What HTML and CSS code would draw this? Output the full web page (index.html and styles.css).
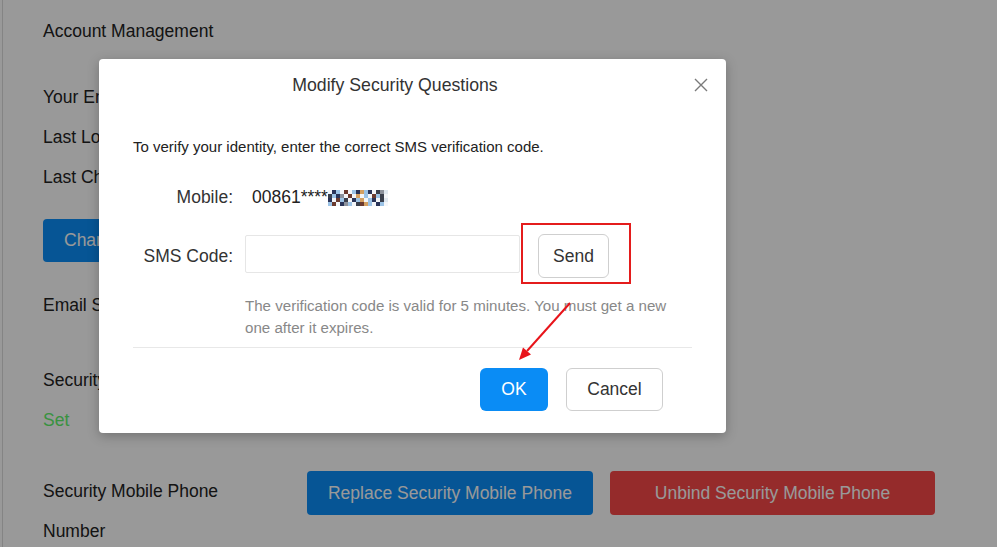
FILE: index.html
```html
<!DOCTYPE html>
<html lang="en">
<head>
<meta charset="utf-8">
<title>Account Management</title>
<link rel="stylesheet" href="styles.css">
</head>
<body>
<div class="page">
  <main class="content">
    <h1 class="page-title">Account Management</h1>
    <div class="info">
      <div class="info-row">Your Email</div>
      <div class="info-row">Last Login</div>
      <div class="info-row">Last Change</div>
    </div>
    <button class="btn-bg btn-blue change-btn">Change</button>
    <div class="info-row email-row">Email Status</div>
    <div class="info-row sec-row">Security Questions</div>
    <div class="info-row set">Set</div>
    <div class="phone-row">
      <div class="phone-label">Security Mobile Phone Number</div>
      <div class="phone-actions">
        <button class="btn-bg btn-blue replace-btn">Replace Security Mobile Phone</button>
        <button class="btn-bg btn-red unbind-btn">Unbind Security Mobile Phone</button>
      </div>
    </div>
  </main>
</div>

<div class="overlay">
  <div class="modal">
    <div class="modal-header">
      <div class="modal-title">Modify Security Questions</div>
      <button class="close" aria-label="Close">
        <svg width="14" height="14" viewBox="0 0 14 14"><path d="M1 1L13 13M13 1L1 13" stroke="#7a7a7a" stroke-width="1.4" fill="none"/></svg>
      </button>
    </div>
    <div class="modal-body">
      <p class="intro">To verify your identity, enter the correct SMS verification code.</p>
      <div class="form-row mobile-row">
        <div class="label">Mobile:</div>
        <div class="value">00861****<span class="blob"><i class="w"></i><i class="k"></i><i class="l"></i><i class="w"></i><i class="b"></i><i class="w"></i><i class="l"></i><i class="k"></i><i class="o"></i><i class="l"></i><i class="k"></i><i class="w"></i><i class="d"></i><i class="g"></i><i class="p"></i><i class="d"></i><i class="l"></i><i class="k"></i><i class="g"></i><i class="w"></i><i class="b"></i><i class="w"></i><i class="o"></i><i class="w"></i><i class="l"></i><i class="w"></i><i class="b"></i><i class="l"></i><i class="d"></i><i class="w"></i><i class="k"></i><i class="w"></i><i class="b"></i><i class="l"></i><i class="d"></i><i class="w"></i><i class="k"></i><i class="l"></i><i class="o"></i><i class="w"></i><i class="l"></i><i class="k"></i><i class="w"></i><i class="d"></i><i class="p"></i><i class="l"></i><i class="b"></i><i class="w"></i><i class="k"></i><i class="g"></i><i class="l"></i><i class="w"></i><i class="d"></i><i class="b"></i><i class="o"></i><i class="l"></i><i class="w"></i><i class="k"></i><i class="l"></i><i class="w"></i></span></div>
      </div>
      <div class="form-row sms-row">
        <div class="label">SMS Code:</div>
        <input class="code-input" type="text">
        <div class="send-wrap">
          <button class="send">Send</button>
        </div>
      </div>
      <p class="help">The verification code is valid for 5 minutes. You must get a new one after it expires.</p>
      <div class="divider"></div>
      <div class="modal-footer">
        <button class="ok">OK</button>
        <button class="cancel">Cancel</button>
      </div>
    </div>
    <svg class="arrow" width="70" height="70" viewBox="0 0 70 70">
      <line x1="56" y1="4" x2="13" y2="52" stroke="#e8141a" stroke-width="2"/>
      <polygon points="5,61 17,55.5 9,48.5" fill="#e8141a"/>
    </svg>
  </div>
</div>
</body>
</html>
```

FILE: styles.css
```css
* { box-sizing: border-box; }
html, body { margin: 0; padding: 0; }
body {
  width: 997px;
  height: 547px;
  overflow: hidden;
  font-family: "Liberation Sans", Arial, sans-serif;
  background: #fff;
  color: #222;
  position: relative;
}
.page {
  padding-left: 2px;
  height: 547px;
}
.content {
  border-left: 1px solid #dcdcdc;
  padding-left: 40px;
  height: 547px;
  padding-top: 11px;
}
.page-title {
  margin: 0;
  font-size: 17.5px;
  font-weight: normal;
  line-height: 40px;
}
.info { margin-top: 26px; }
.info-row {
  font-size: 17.5px;
  line-height: 40px;
  white-space: nowrap;
}
.btn-bg {
  font-family: "Liberation Sans", Arial, sans-serif;
  border: none;
  border-radius: 4px;
  color: #fff;
  font-size: 17.5px;
  display: block;
}
.btn-blue { background: #0a8ef8; }
.btn-red { background: #f84848; }
.change-btn {
  margin-top: 22px;
  height: 43px;
  width: 100px;
  text-align: left;
  padding-left: 21px;
}
.email-row { margin-top: 23px; }
.sec-row { margin-top: 35px; }
.set { color: #60f46c; }
.phone-row {
  margin-top: 31px;
  display: flex;
  align-items: flex-start;
}
.phone-label {
  width: 200px;
  font-size: 17.5px;
  line-height: 40px;
}
.phone-actions {
  margin-left: 64px;
  display: flex;
  gap: 17px;
}
.replace-btn { width: 286px; height: 44px; }
.unbind-btn { width: 325px; height: 44px; }

.overlay {
  position: absolute;
  inset: 0;
  background: rgba(0, 0, 0, 0.4);
  padding-left: 99px;
  padding-top: 59px;
}
.modal {
  position: relative;
  width: 627px;
  height: 374px;
  background: #fff;
  border-radius: 4px;
  box-shadow: 0 3px 12px rgba(0, 0, 0, 0.25);
}
.modal-header {
  display: flex;
  height: 52px;
  padding-right: 16px;
}
.modal-title {
  flex: 1;
  text-align: center;
  font-size: 17.7px;
  line-height: 52px;
  color: #333;
}
.close {
  width: 19px;
  border: none;
  background: none;
  padding: 0;
  display: flex;
  align-items: center;
  justify-content: center;
}
.modal-body {
  padding: 26px 34px 0 34px;
}
.intro {
  margin: 0;
  font-size: 15px;
  line-height: 20px;
  color: #222;
}
.form-row {
  display: flex;
  align-items: center;
}
.label {
  width: 100px;
  text-align: right;
  font-size: 17.5px;
  color: #333;
  flex: none;
}
.mobile-row {
  margin-top: 21px;
  height: 38px;
}
.value {
  margin-left: 19px;
  font-size: 17.5px;
  color: #222;
  display: flex;
  align-items: center;
}
.blob {
  display: inline-grid;
  grid-template-columns: repeat(15, 4px);
  grid-auto-rows: 4px;
  margin-top: 1px;
}
.blob i { display: block; }
.blob .w { background: #f4f6f9; }
.blob .k { background: #2a3458; }
.blob .l { background: #9cc3e6; }
.blob .b { background: #6b3a2e; }
.blob .o { background: #d4a061; }
.blob .d { background: #3a3f4c; }
.blob .g { background: #8d929c; }
.blob .p { background: #dfe7ef; }

.sms-row {
  margin-top: 18px;
  height: 44px;
  align-items: flex-start;
}
.sms-row .label { line-height: 44px; }
.code-input {
  margin-left: 12px;
  margin-top: 1px;
  width: 275px;
  height: 38px;
  border: 1px solid #e6e6e6;
  border-radius: 2px;
  outline: none;
}
.send-wrap {
  position: relative;
  margin-left: 18px;
}
.send-wrap::after {
  content: "";
  position: absolute;
  left: -17px;
  top: -11px;
  right: -22px;
  bottom: -6px;
  border: 2px solid #e41c1c;
}
.send {
  width: 71px;
  height: 44px;
  border: 1px solid #cfcfcf;
  border-radius: 6px;
  background: #fff;
  font-family: "Liberation Sans", Arial, sans-serif;
  font-size: 17.5px;
  color: #333;
}
.help {
  margin: 17px 0 0 112px;
  max-width: 440px;
  font-size: 15.1px;
  line-height: 22px;
  color: #888;
}
.divider {
  margin-top: 8px;
  height: 1px;
  background: #e8e8e8;
}
.modal-footer {
  display: flex;
  justify-content: flex-end;
  gap: 18px;
  padding: 20px 29px 0 0;
}
.ok, .cancel {
  height: 43px;
  border-radius: 6px;
  font-family: "Liberation Sans", Arial, sans-serif;
  font-size: 17.5px;
}
.ok {
  width: 68px;
  background: #0a8cf5;
  border: none;
  color: #fff;
}
.cancel {
  width: 97px;
  background: #fff;
  border: 1px solid #cfcfcf;
  color: #333;
}
.arrow {
  position: absolute;
  left: 415px;
  top: 240px;
}
```
